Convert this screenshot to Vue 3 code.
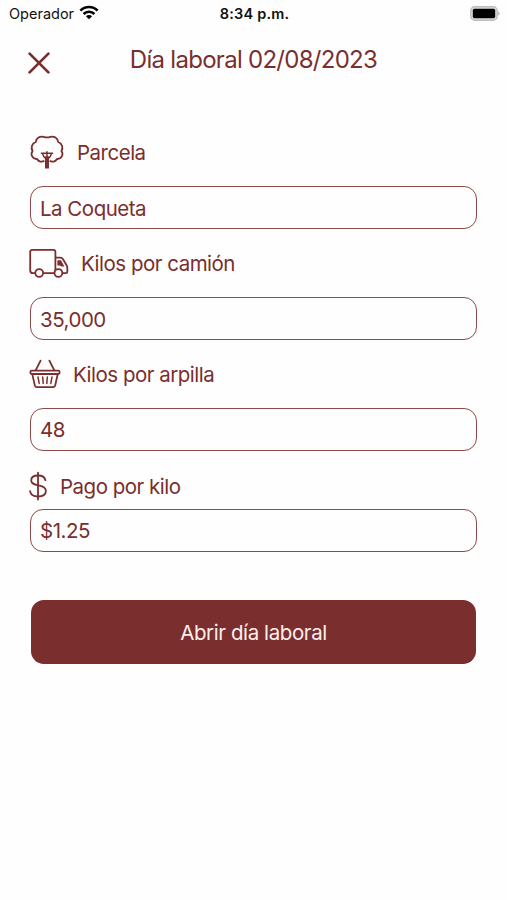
<template>
    <div class="screen">
        <div class="status-bar">
            <div class="carrier">
                <span class="carrier-name">Operador</span>
                <svg class="wifi" width="20" height="15" viewBox="0 0 20 15" fill="none" stroke="#000" stroke-width="2.7">
                    <path d="M1.4 5.6C6.2.8 13.8.8 18.6 5.6" />
                    <path d="M4.6 9C7.6 6 12.4 6 15.4 9" />
                    <path d="M10 14.3L6.9 11.2C8.6 9.6 11.4 9.6 13.1 11.2Z" fill="#000" stroke="none" />
                </svg>
            </div>
            <span class="clock">8:34 p.m.</span>
            <svg class="battery" width="30" height="15" viewBox="0 0 30 15">
                <rect x="0.8" y="0.8" width="26.4" height="13.4" rx="4" fill="#ddd" stroke="#bdbdbd" stroke-width="1.4" />
                <rect x="2.8" y="2.8" width="22.4" height="9.4" rx="1.6" fill="#000" />
                <path d="M28.4 5.2Q30.8 7.5 28.4 9.8Z" fill="#aaa" />
            </svg>
        </div>

        <header class="header">
            <button class="close" aria-label="Cerrar">
                <svg width="22" height="22" viewBox="0 0 22 22" fill="none" stroke="currentColor" stroke-width="2.7" stroke-linecap="round">
                    <path d="M1.6 1.6L20.4 20.4M20.4 1.6L1.6 20.4" />
                </svg>
            </button>
            <h1>Día laboral 02/08/2023</h1>
        </header>

        <form class="form" @submit.prevent>
            <div v-for="campo in campos" :key="campo.id" class="field">
                <label :for="campo.id" :class="['label', campo.id]">
                    <svg v-if="campo.id === 'parcela'" class="icon" width="36" height="36" viewBox="0 0 36 36">
                        <path d="M15.4 26.8A5.2 5.2 0 0 1 8 25A5 5 0 0 1 3.6 17A6 6 0 0 1 6.8 8A6.2 6.2 0 0 1 14.6 2.8Q18 4 21.4 2.8A6.2 6.2 0 0 1 29.2 8A6 6 0 0 1 32.4 17A5 5 0 0 1 28 25A5.2 5.2 0 0 1 20.6 26.8" fill="none" stroke="currentColor" stroke-width="1.8" stroke-linejoin="round" />
                        <path d="M12.4 19.2H23.6M13.6 19.6Q14 22.4 17.2 25M22.4 19.6Q22 22.4 18.8 25M18 17.8V24" fill="none" stroke="currentColor" stroke-width="1.5" stroke-linecap="round" />
                        <path d="M16 22.4H20V34.5H16Z" fill="currentColor" />
                    </svg>
                    <svg v-else-if="campo.id === 'camion'" class="icon" width="40" height="30" viewBox="0 0 40 30" fill="none" stroke="currentColor" stroke-width="1.8" stroke-linejoin="round">
                        <path d="M6 25.2H4Q1.2 25.2 1.2 22.6V4Q1.2 1.9 3.4 1.9H24.2Q26.4 1.9 26.4 4V25.2H14.2" />
                        <path d="M26.4 9.6H31.3Q33 9.6 34 11.2L37.6 17.2Q38.3 18.3 38.3 19.6V24Q38.3 25.2 37 25.2H34" />
                        <path d="M28.4 12.2H32L35.4 18.4H32.4Q31.6 17.2 28.4 17.6Z" fill="currentColor" stroke="none" />
                        <circle cx="10.2" cy="25" r="3.9" fill="#fff" />
                        <circle cx="29.4" cy="25" r="3.9" fill="#fff" />
                    </svg>
                    <svg v-else-if="campo.id === 'arpilla'" class="icon" width="32" height="30" viewBox="0 0 32 30" fill="none" stroke="currentColor" stroke-width="1.8" stroke-linecap="round" stroke-linejoin="round">
                        <rect x="1.4" y="11.6" width="29.2" height="3.4" rx="1.4" />
                        <path d="M3.4 15.6L5.8 26.4Q6.3 28.2 8 28.2H24Q25.7 28.2 26.2 26.4L28.6 15.6" />
                        <path d="M6.8 11.2L11.6 1.6M25.2 11.2L20.4 1.6" />
                        <path d="M9 18L10.2 24.4M13.7 18L14.2 24.4M18.3 18L17.8 24.4M23 18L21.8 24.4" stroke-width="1.5" />
                    </svg>
                    <svg v-else class="icon" width="18" height="30" viewBox="0 0 18 30" fill="none" stroke="currentColor" stroke-width="1.8" stroke-linecap="round">
                        <path d="M9 1.6V28.6" />
                        <path d="M16.4 9.2C15.8 6.2 13 4.5 9 4.5C5 4.5 2.2 6.4 2.2 9.5C2.2 16.4 16.9 12.4 16.9 19.8C16.9 23.5 13.6 25.5 9 25.5C4.6 25.5 1.5 23.7 1.1 20.2" />
                    </svg>
                    <span>{{ campo.label }}</span>
                </label>
                <input :id="campo.id" v-model="campo.valor" type="text">
            </div>
            <button type="submit" class="submit">Abrir día laboral</button>
        </form>
    </div>
</template>

<script setup>
import { ref } from 'vue';

const campos = ref([
    { id: 'parcela', label: 'Parcela', valor: 'La Coqueta' },
    { id: 'camion', label: 'Kilos por camión', valor: '35,000' },
    { id: 'arpilla', label: 'Kilos por arpilla', valor: '48' },
    { id: 'pago', label: 'Pago por kilo', valor: '$1.25' },
]);
</script>

<style>
body {
    margin: 0;
    background: #fff;
}
</style>

<style scoped>
.screen {
    box-sizing: border-box;
    height: 900px;
    color: #7a2e2d;
    background: #fefefe;
    font-family: Inter, "Liberation Sans", sans-serif;
}

.status-bar {
    display: grid;
    grid-template-columns: 1fr auto 1fr;
    align-items: center;
    height: 27px;
    padding: 0 7px 0 9px;
    color: #111;
    font-size: 14.5px;
}

.carrier {
    display: flex;
    align-items: center;
    gap: 5px;
}

.wifi {
    margin-top: -2px;
}

.clock {
    font-weight: 600;
    letter-spacing: 0.2px;
}

.battery {
    justify-self: end;
    margin-top: -1px;
}

.header {
    display: grid;
    grid-template-columns: 52px 1fr 52px;
    height: 91px;
    align-items: start;
}

.close {
    margin: 25px 0 0 28px;
    padding: 0;
    width: 22px;
    height: 22px;
    border: none;
    background: none;
    color: inherit;
}

.close svg {
    display: block;
}

h1 {
    margin: 17px 0 0;
    font-size: 24px;
    line-height: 32px;
    font-weight: 400;
    letter-spacing: -0.72px;
    text-align: center;
}

.form {
    display: flex;
    flex-direction: column;
    padding: 0 30px;
}

.label {
    display: flex;
    align-items: center;
    box-sizing: border-box;
    height: 68px;
    font-size: 20.5px;
    letter-spacing: -0.5px;
}

.icon {
    margin-left: -1px;
    flex-shrink: 0;
}

.parcela {
    gap: 12px;
}

.camion {
    gap: 12px;
}

.arpilla {
    gap: 12px;
}

.pago {
    height: 58px;
    padding-top: 12px;
    gap: 13px;
}

input {
    display: block;
    box-sizing: border-box;
    width: 447px;
    height: 43px;
    padding: 2px 9px 0;
    border: 1.5px solid #8c4a48;
    border-radius: 13px;
    background: transparent;
    color: inherit;
    font: inherit;
    font-size: 20.5px;
    letter-spacing: -0.5px;
    outline: none;
}

#arpilla,
#pago {
    padding-top: 0;
}

.submit {
    margin: 48px 1px 0;
    height: 64px;
    border: none;
    border-radius: 13px;
    background: #7a2e2d;
    color: #fdeeee;
    font: inherit;
    font-size: 20.5px;
    letter-spacing: -0.4px;
}
</style>
